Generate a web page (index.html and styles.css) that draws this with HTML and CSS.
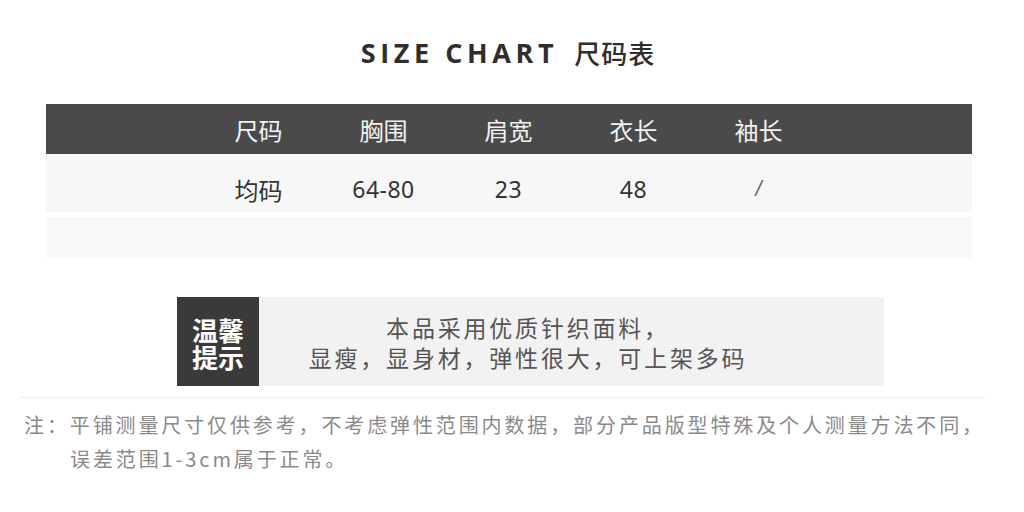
FILE: index.html
```html
<!DOCTYPE html>
<html lang="zh">
<head>
<meta charset="utf-8">
<link rel="stylesheet" href="styles.css">
</head>
<body>
<div class="page">
  <h1 class="title"><span class="en">SIZE CHART</span><span class="cn">尺码表</span></h1>
  <div class="table">
    <div class="row head">
      <div class="cell">尺码</div><div class="cell">胸围</div><div class="cell">肩宽</div><div class="cell">衣长</div><div class="cell">袖长</div>
    </div>
    <div class="row data">
      <div class="cell">均码</div><div class="cell num">64-80</div><div class="cell num">23</div><div class="cell num">48</div><div class="cell slash">/</div>
    </div>
    <div class="row empty"></div>
  </div>
  <div class="tip">
    <div class="tip-label"><span>温馨</span><span>提示</span></div>
    <div class="tip-body">本品采用优质针织面料，<br>显瘦，显身材，弹性很大，可上架多码</div>
  </div>
  <div class="note">
    <p class="note-text">注：平铺测量尺寸仅供参考，不考虑弹性范围内数据，部分产品版型特殊及个人测量方法不同，误差范围1-3cm属于正常。</p>
  </div>
</div>
</body>
</html>
```
FILE: styles.css
```css
* { box-sizing: border-box; margin: 0; padding: 0; }
html, body { background: #fff; }
body {
  width: 1024px; height: 512px; overflow: hidden;
  font-family: "Noto Sans CJK SC", "Noto Sans", sans-serif;
  color: #333;
}
.page { padding-top: 32px; }
.title {
  display: flex; justify-content: center; align-items: center;
  gap: 16px; height: 40px; padding-right: 8px;
  font-weight: 700; color: #2e2e2e;
}
.title .en {
  font-family: "Open Sans", "Noto Sans", sans-serif;
  font-size: 27px; letter-spacing: 4.6px;
}
.title .cn { font-size: 26px; font-weight: 500; letter-spacing: 1px; }
.table { margin: 32px 52px 0 46px; display: flex; flex-direction: column; gap: 5px; }
.row { display: flex; padding: 0 150px; }
.row .cell { width: 125px; text-align: center; }
.head { background: #4a4a4a; height: 50px; align-items: center; color: #f2f2f2; font-size: 24px; margin-bottom: -5px; }
.data { background: #f7f7f7; height: 58px; align-items: center; font-size: 24px; color: #333; padding-top: 12px; }
.data .num { font-family: "Noto Sans", sans-serif; font-size: 23px; color: #333; letter-spacing: 0.5px; }
.data .slash { font-family: "Liberation Sans", sans-serif; font-size: 22px; color: #666; font-style: italic; }
.empty { background: #f8f8f8; height: 41px; }
.tip { display: flex; margin: 39px 0 0 177px; width: 707px; height: 89px; }
.tip-label {
  width: 82px; background: #3a3a3a; color: #fff;
  font-size: 26px; font-weight: 700;
  display: flex; flex-direction: column; align-items: center; justify-content: center;
  padding-top: 2px;
}
.tip-label span { display: block; height: 27px; line-height: 27px; }
.tip-body {
  flex: 1; background: #f2f2f2; color: #555;
  font-size: 23px; line-height: 30px; letter-spacing: 2.8px;
  display: flex; align-items: center; justify-content: center; text-align: center;
  padding-right: 87px;
}
.note { margin: 11px 39px 0 20px; border-top: 1px solid #ececec; padding: 10px 0 0 4px; }
.note-text {
  font-size: 20px; line-height: 34px; color: #8a8a8a; letter-spacing: 2.88px;
  padding-left: 46px; text-indent: -46px;
}
```
